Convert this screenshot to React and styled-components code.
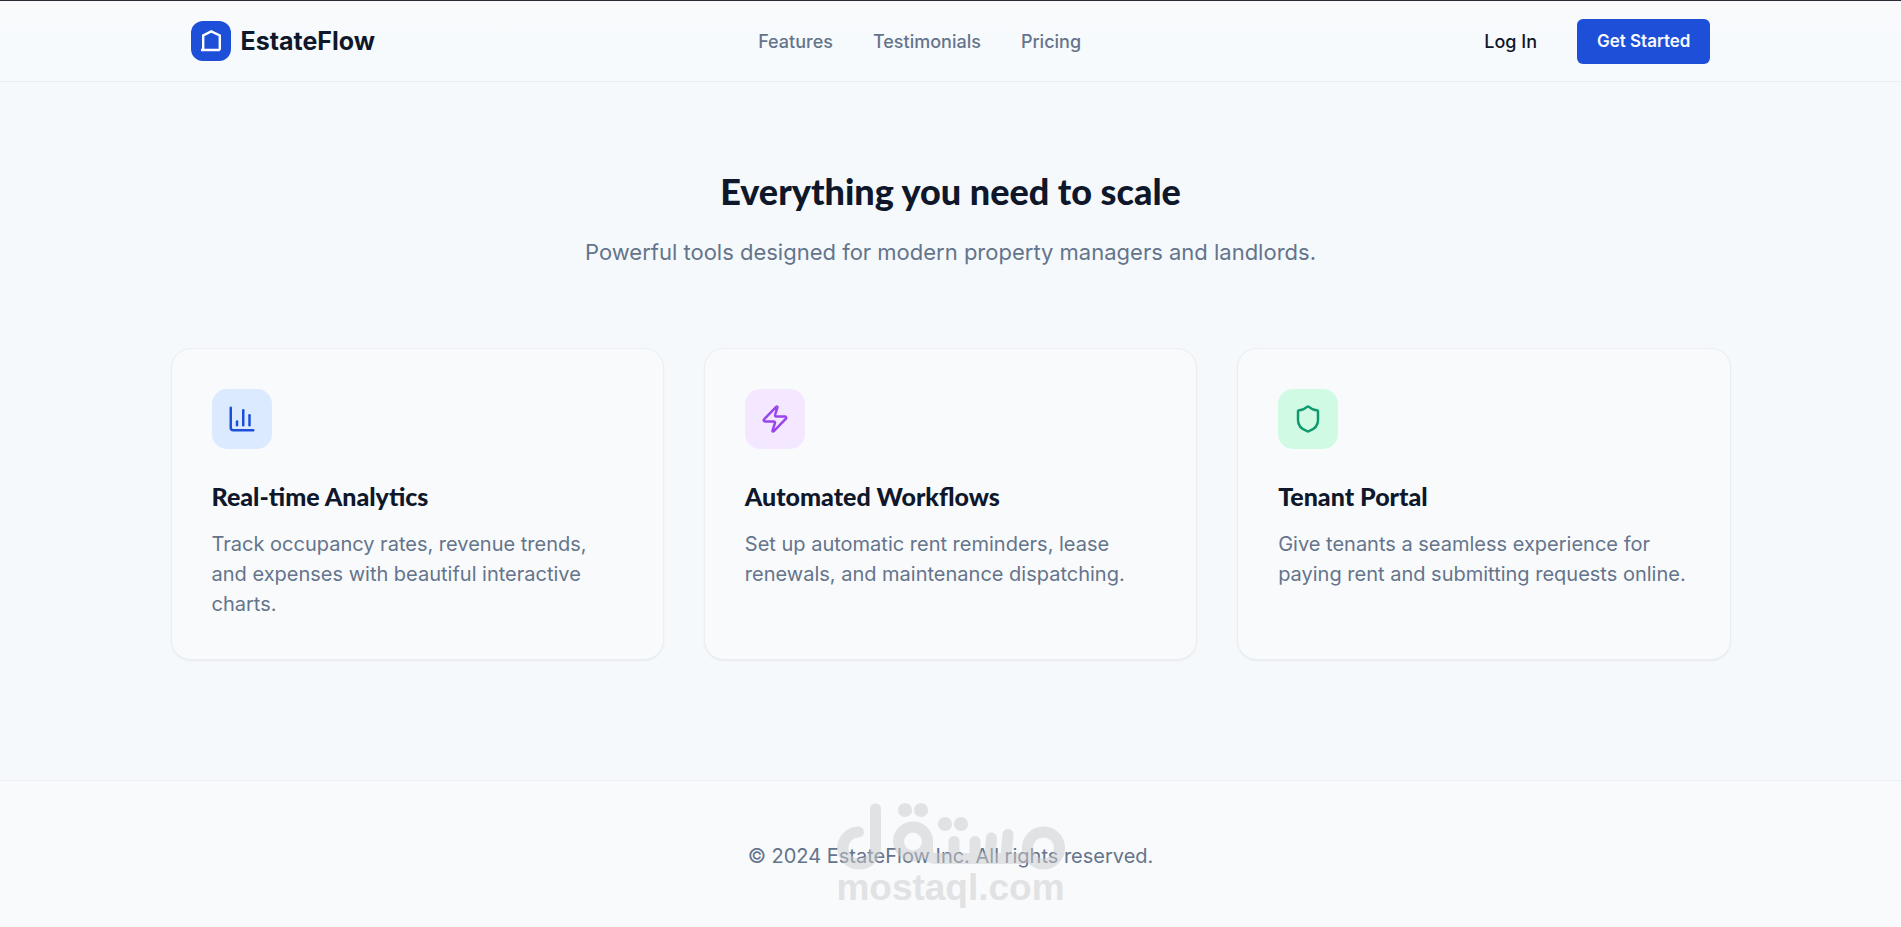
import React from 'react'
import styled, { createGlobalStyle, ThemeProvider } from 'styled-components'
import { ChartColumn, Shield, Zap } from 'lucide-react'

const theme = {
  ink: '#0f172a',
  muted: '#64748b',
  primary: '#1d4fd8',
  pageBg: '#f5f9fc',
  surface: '#f9fafc',
  line: '#ebeff3',
  sans: 'Inter, "Liberation Sans", sans-serif',
  display: 'Lato, "Open Sans", sans-serif',
}

const links = ['Features', 'Testimonials', 'Pricing']

const features = [
  {
    icon: ChartColumn,
    color: '#1d4fd8',
    bg: '#dbeafe',
    title: 'Real-time Analytics',
    text:
      'Track occupancy rates, revenue trends, and expenses with beautiful interactive charts.',
  },
  {
    icon: Zap,
    color: '#9945ee',
    bg: '#f3e8ff',
    title: 'Automated Workflows',
    text:
      'Set up automatic rent reminders, lease renewals, and maintenance dispatching.',
  },
  {
    icon: Shield,
    color: '#0f9a6e',
    bg: '#d1fae5',
    title: 'Tenant Portal',
    text:
      'Give tenants a seamless experience for paying rent and submitting requests online.',
  },
]

const LogoIcon = () => (
  <svg
    width="20"
    height="22"
    viewBox="0 0 20 22"
    fill="none"
    stroke="#fff"
    strokeWidth="2.4"
    aria-hidden="true"
  >
    <path d="M0 20H17Q18.8 20 18.8 18.4V5.4L10.2 1.4L2.2 5.4V20" />
  </svg>
)

const Logotype = () => (
  <svg
    width="228"
    height="68"
    viewBox="0 0 228 68"
    fill="none"
    stroke="currentColor"
    strokeWidth="11"
    strokeLinecap="round"
    strokeLinejoin="round"
    role="img"
    aria-label="مستقل"
  >
    <path d="M21.5 29A16 16 0 0 0 22 61A16 16 0 0 0 38.5 45V6" />
    <circle cx="76" cy="38.5" r="14.5" />
    <path d="M90.5 38.5V47Q90.5 55.5 99 55.5H184Q190.5 55.5 190.5 45" />
    <path d="M117 55V38.5M138 55V38.5M153 54L154.5 35M169 54L171 31.5" />
    <circle cx="206.5" cy="45" r="16" />
    <g fill="currentColor" stroke="none">
      <circle cx="68" cy="7" r="7" />
      <circle cx="84" cy="7" r="7" />
      <circle cx="108" cy="21" r="7" />
      <circle cx="124" cy="21" r="7" />
    </g>
  </svg>
)

const App = () => (
  <ThemeProvider theme={theme}>
    <GlobalStyle />
    <Page>
      <Header>
        <HeaderInner>
          <Brand href="#top">
            <BrandMark>
              <LogoIcon />
            </BrandMark>
            EstateFlow
          </Brand>
          <Nav>
            {links.map(link => (
              <NavLink key={link} href={`#${link.toLowerCase()}`}>
                {link}
              </NavLink>
            ))}
          </Nav>
          <Actions>
            <LoginLink href="#login">Log In</LoginLink>
            <StartButton type="button">Get Started</StartButton>
          </Actions>
        </HeaderInner>
      </Header>
      <Features id="features">
        <Title>Everything you need to scale</Title>
        <Subtitle>
          Powerful tools designed for modern property managers and landlords.
        </Subtitle>
        <CardGrid>
          {features.map(({ icon: Icon, color, bg, title, text }) => (
            <Card key={title}>
              <CardIcon $color={color} $bg={bg}>
                <Icon size={30} aria-hidden="true" />
              </CardIcon>
              <CardTitle>{title}</CardTitle>
              <CardText>{text}</CardText>
            </Card>
          ))}
        </CardGrid>
      </Features>
      <Footer>
        <Copyright>© 2024 EstateFlow Inc. All rights reserved.</Copyright>
        <Watermark>
          <Logotype />
          <WatermarkText>mostaql.com</WatermarkText>
        </Watermark>
      </Footer>
    </Page>
  </ThemeProvider>
)

const GlobalStyle = createGlobalStyle`
  *, *::before, *::after {
    box-sizing: border-box;
  }
  body {
    margin: 0;
    background-color: ${props => props.theme.pageBg};
    color: ${props => props.theme.ink};
    font-family: ${props => props.theme.sans};
  }
`

const Page = styled.div`
  display: flex;
  flex-direction: column;
  min-height: 100vh;
`

const Header = styled.header`
  border-top: 1px solid #2b2b35;
  border-bottom: 1px solid ${props => props.theme.line};
  background: linear-gradient(#fafafc, #f7fafd 50%);
`

const HeaderInner = styled.div`
  display: flex;
  justify-content: space-between;
  align-items: center;
  max-width: 1560px;
  height: 80px;
  margin: 0 auto;
  padding: 0 20px;
`

const Brand = styled.a`
  display: flex;
  align-items: center;
  gap: 10px;
  color: inherit;
  font-size: 25px;
  font-weight: 700;
  text-decoration: none;
`

const BrandMark = styled.span`
  display: flex;
  justify-content: center;
  align-items: center;
  width: 40px;
  height: 40px;
  border-radius: 12px;
  background-color: ${props => props.theme.primary};
`

const Nav = styled.nav`
  display: flex;
  gap: 40px;
`

const NavLink = styled.a`
  color: ${props => props.theme.muted};
  font-size: 18px;
  font-weight: 500;
  text-decoration: none;
`

const Actions = styled.div`
  display: flex;
  align-items: center;
  gap: 20px;
`

const LoginLink = styled(NavLink)`
  padding: 10px 20px;
  color: ${props => props.theme.ink};
`

const StartButton = styled.button`
  height: 45px;
  padding: 0 20px;
  border: 0;
  border-radius: 6px;
  background-color: ${props => props.theme.primary};
  color: #f8fafc;
  font-family: inherit;
  font-size: 17px;
  font-weight: 600;
  cursor: pointer;
`

const Features = styled.main`
  width: 100%;
  max-width: 1560px;
  margin: 0 auto;
  padding: 85px 0 120px;
`

const Title = styled.h2`
  margin: 0;
  font-family: ${props => props.theme.display};
  font-size: 36px;
  font-weight: 900;
  line-height: 48px;
  text-align: center;
`

const Subtitle = styled.p`
  margin: 20px 0 78px;
  color: ${props => props.theme.muted};
  font-size: 22px;
  line-height: 35px;
  text-align: center;
`

const CardGrid = styled.div`
  display: grid;
  grid-template-columns: repeat(3, 1fr);
  gap: 40px;
`

const Card = styled.article`
  padding: 40px;
  border: 1px solid ${props => props.theme.line};
  border-radius: 20px;
  background-color: ${props => props.theme.surface};
  box-shadow: 0 1px 2px rgba(15, 23, 42, 0.06);
`

const CardIcon = styled.div`
  display: flex;
  justify-content: center;
  align-items: center;
  width: 60px;
  height: 60px;
  border-radius: 15px;
  background-color: ${props => props.$bg};
  color: ${props => props.$color};
`

const CardTitle = styled.h3`
  margin: 30px 0 15px;
  font-family: ${props => props.theme.display};
  font-size: 25px;
  font-weight: 900;
  line-height: 35px;
`

const CardText = styled.p`
  margin: 0;
  color: ${props => props.theme.muted};
  font-size: 20px;
  line-height: 30px;
`

const Footer = styled.footer`
  position: relative;
  flex: 1;
  padding: 60px 20px;
  border-top: 1px solid ${props => props.theme.line};
  background-color: ${props => props.theme.surface};
  text-align: center;
`

const Copyright = styled.p`
  margin: 0;
  color: ${props => props.theme.muted};
  font-size: 20px;
  line-height: 30px;
`

/* Lies over the copyright line */
const Watermark = styled.div`
  position: absolute;
  top: 22px;
  left: 0;
  right: 0;
  display: flex;
  flex-direction: column;
  align-items: center;
  color: #cbcbcb;
  opacity: 0.5;
  pointer-events: none;
`

const WatermarkText = styled.span`
  font-family: 'Liberation Sans', sans-serif;
  font-size: 37px;
  font-weight: 700;
  line-height: 34px;
`

export default App
